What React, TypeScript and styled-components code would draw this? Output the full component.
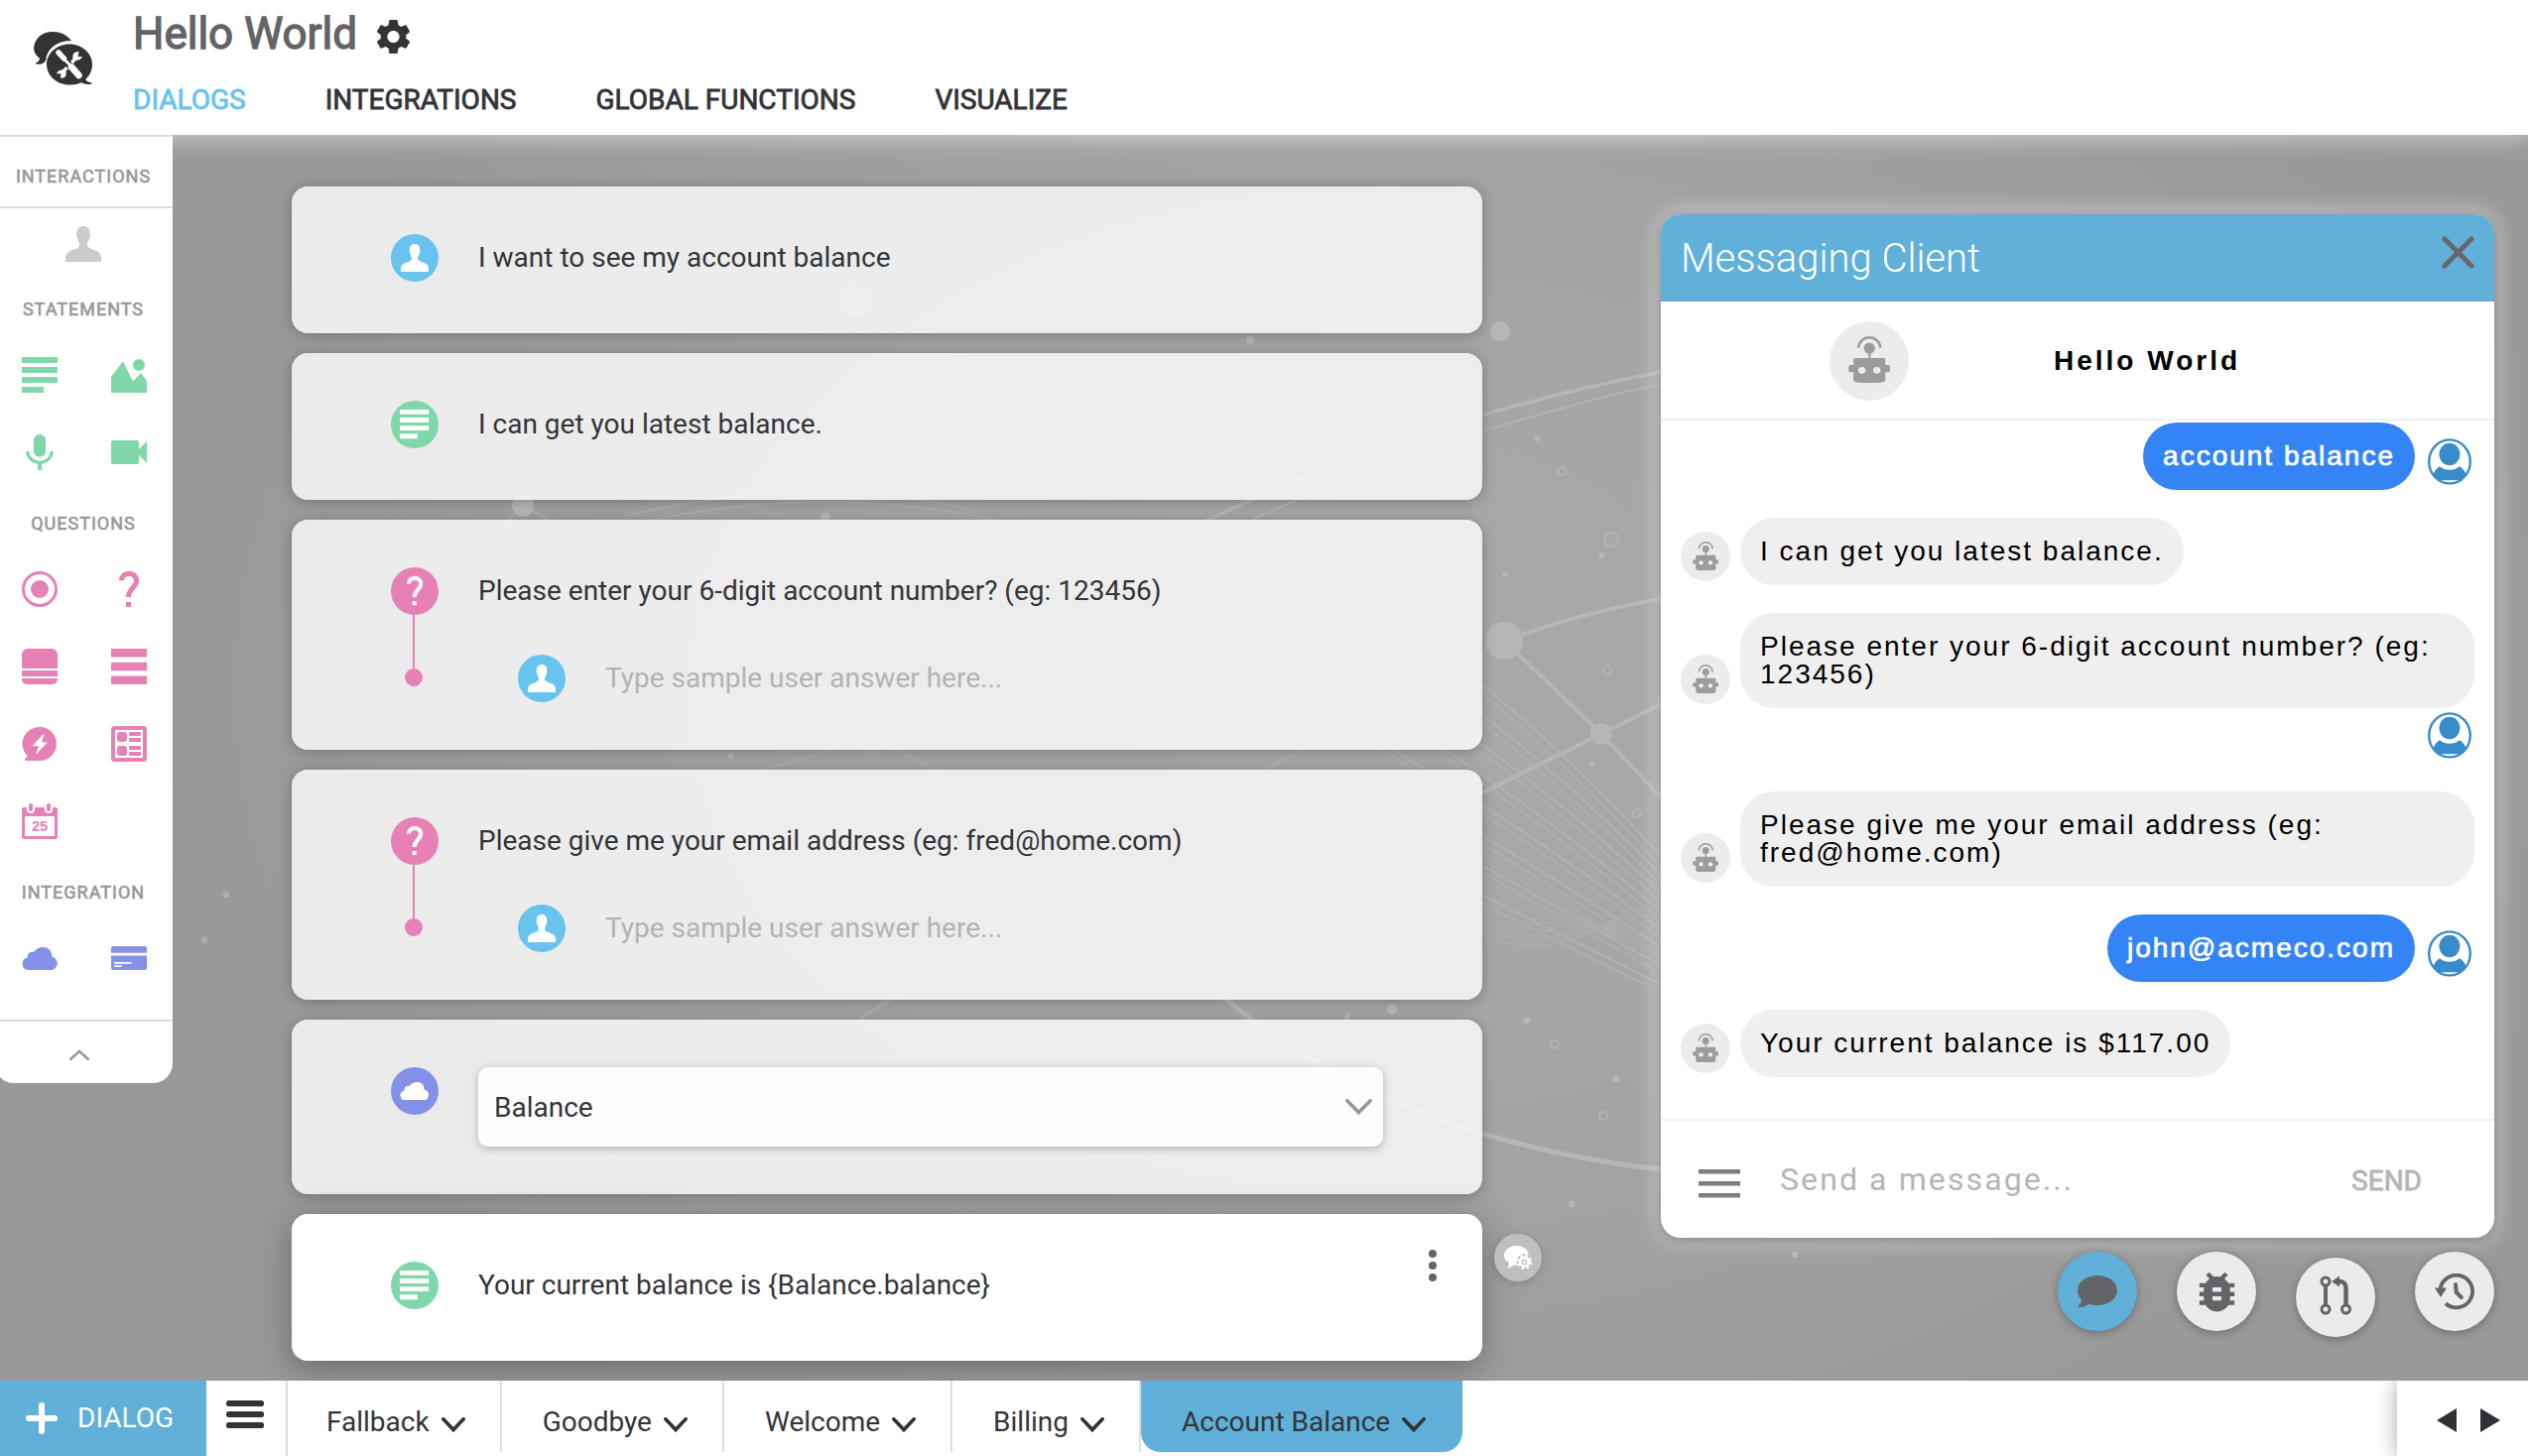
import React from 'react';
import styled, { createGlobalStyle, css } from 'styled-components';

const GREEN = '#7fd7aa';
const PINK = '#e681b6';
const BLUE = '#69c3ef';
const VIOLET = '#8491e8';
const BRAND = '#60b0d9';
const INK = '#333438';

const GlobalStyle = createGlobalStyle`
  * { box-sizing: border-box; }
  body { margin: 0; background: #fff; font-family: Roboto, "Liberation Sans", sans-serif; color: ${INK}; }
  button { font: inherit; color: inherit; border: 0; background: none; padding: 0; }
  svg { display: block; flex: none; }
`;

const Page = styled.div`
  width: 2548px;
  height: 1468px;
  display: flex;
  flex-direction: column;
  overflow: hidden;
`;

/* ---------- header ---------- */

const Header = styled.header`
  position: relative;
  z-index: 1;
  height: 136px;
  flex: none;
  display: flex;
  background: #fff;
  box-shadow: 0 0 24px rgba(255, 255, 255, 0.65);
`;

const LogoBox = styled.div`
  width: 134px;
  padding: 32px 0 0 34px;
`;

const HeaderBody = styled.div`
  padding-top: 12px;
`;

const TitleRow = styled.div`
  display: flex;
  align-items: center;
  gap: 20px;
  height: 44px;
  svg {
    margin-top: 5px;
  }
`;

const Title = styled.h1`
  margin: 0;
  font-size: 44px;
  line-height: 44px;
  font-weight: 400;
  color: #636467;
  -webkit-text-stroke: 1.3px #636467;
`;

const Nav = styled.nav`
  display: flex;
  gap: 80px;
  margin-top: 28px;
`;

const NavItem = styled.a<{ $active?: boolean }>`
  font-size: 28px;
  line-height: 34px;
  color: ${(p) => (p.$active ? BLUE : INK)};
  -webkit-text-stroke: 0.8px ${(p) => (p.$active ? BLUE : INK)};
`;

/* ---------- workspace ---------- */

const Workspace = styled.main`
  position: relative;
  height: 1256px;
  flex: none;
  display: flex;
  background: radial-gradient(ellipse 1250px 900px at 1400px 560px, #a9a9a9 0%, #a5a5a5 45%, #999 100%);
`;

const Backdrop = styled.svg`
  position: absolute;
  inset: 0;
`;

const Sidebar = styled.aside`
  position: relative;
  z-index: 2;
  align-self: flex-start;
  width: 180px;
  height: 956px;
  margin-left: -6px;
  padding-left: 6px;
  background: #fff;
  border-top: 2px solid #dddce1;
  border-radius: 0 0 20px 20px;
`;

const GroupLabel = styled.div<{ $head?: boolean }>`
  width: 168px;
  text-align: center;
  font-size: 18px;
  line-height: 18px;
  letter-spacing: 1px;
  color: #97989a;
  -webkit-text-stroke: 0.6px #97989a;
  margin: 45px 0 39px;
  ${(p) =>
    p.$head &&
    css`
      margin: 0;
      padding: 31px 0 21px;
    `}
`;

const Rule = styled.div<{ $top?: number }>`
  height: 2px;
  margin: ${(p) => p.$top ?? 0}px 0 0 -6px;
  background: #dddce1;
`;

const Solo = styled.div`
  width: 168px;
  display: flex;
  justify-content: center;
  margin: 18px 0 -6px;
`;

const Palette = styled.div`
  display: grid;
  grid-template-columns: 36px 36px;
  grid-auto-rows: 36px;
  gap: 42px 54px;
  padding-left: 22px;
  place-items: center;
`;

const Collapse = styled.button`
  display: flex;
  justify-content: center;
  width: 159px;
  padding-top: 28px;
`;

const Flow = styled.section`
  position: relative;
  width: 1200px;
  margin-left: 120px;
  padding-top: 52px;
  display: flex;
  flex-direction: column;
  gap: 20px;
`;

const Card = styled.article<{ $active?: boolean; $height: number }>`
  display: flex;
  gap: 40px;
  height: ${(p) => p.$height}px;
  padding: 48px 46px 0 100px;
  border-radius: 16px;
  background: ${(p) => (p.$active ? '#fff' : 'rgba(255, 255, 255, 0.8)')};
  box-shadow: ${(p) => (p.$active ? '0 8px 34px rgba(0, 0, 0, 0.32)' : '0 2px 14px rgba(0, 0, 0, 0.26)')};
`;

const Rail = styled.div`
  width: 48px;
  display: flex;
  flex-direction: column;
  align-items: center;
`;

const Disc = styled.div<{ $color: string }>`
  width: 48px;
  height: 48px;
  flex: none;
  border-radius: 50%;
  background: ${(p) => p.$color};
  display: flex;
  align-items: center;
  justify-content: center;
`;

const Stem = styled.div`
  width: 2px;
  height: 54px;
  margin-left: -2px;
  background: ${PINK};
`;

const Knob = styled.div`
  width: 18px;
  height: 18px;
  margin-left: -2px;
  border-radius: 50%;
  background: ${PINK};
`;

const CardBody = styled.div`
  flex: 1;
`;

const Phrase = styled.p<{ $muted?: boolean }>`
  margin: 0;
  font-size: 28px;
  line-height: 48px;
  color: ${(p) => (p.$muted ? '#b3b3b3' : INK)};
`;

const Answer = styled.div`
  display: flex;
  gap: 40px;
  margin: 40px 0 0 40px;
`;

const Select = styled.div`
  display: flex;
  align-items: center;
  justify-content: space-between;
  width: 912px;
  height: 80px;
  padding: 0 11px 0 16px;
  border-radius: 10px;
  background: rgba(255, 255, 255, 0.87);
  box-shadow: 0 2px 8px rgba(0, 0, 0, 0.25);
  font-size: 28px;
`;

const MoreButton = styled.button`
  align-self: flex-start;
  margin: -12px 0 0 auto;
`;

const ContextBadge = styled.button`
  position: relative;
  align-self: flex-end;
  width: 48px;
  height: 48px;
  margin: 0 0 100px 12px;
  border-radius: 50%;
  background: #bfbfbf;
  box-shadow: 0 2px 8px rgba(0, 0, 0, 0.18);
  display: flex;
  align-items: center;
  justify-content: center;
`;

/* ---------- messaging client ---------- */

const Dock = styled.section`
  position: relative;
  width: 840px;
  margin: 0 34px 0 auto;
  padding-top: 80px;
`;

const Panel = styled.div`
  height: 1032px;
  display: flex;
  flex-direction: column;
  background: #fff;
  border-radius: 20px;
  box-shadow: 0 2px 10px rgba(0, 0, 0, 0.3), 0 0 20px 5px rgba(255, 255, 255, 0.42);
`;

const PanelHead = styled.div`
  height: 88px;
  flex: none;
  display: flex;
  justify-content: space-between;
  padding: 0 20px;
  background: ${BRAND};
  border-bottom: 2px solid #6ba5cb;
  border-radius: 20px 20px 0 0;
`;

const PanelTitle = styled.h2`
  margin: 0;
  font-size: 40px;
  line-height: 90px;
  font-weight: 300;
  color: #fff;
`;

const CloseButton = styled.button`
  align-self: flex-start;
  padding-top: 22px;
`;

const BotBar = styled.div`
  height: 120px;
  flex: none;
  display: flex;
  padding: 20px 0 0 170px;
  border-bottom: 2px solid #efefef;
`;

const BotFace = styled.div<{ $size: number }>`
  width: ${(p) => p.$size}px;
  height: ${(p) => p.$size}px;
  flex: none;
  border-radius: 50%;
  background: #ececec;
  display: flex;
  justify-content: center;
  padding-top: ${(p) => p.$size * 0.19}px;
`;

const BotName = styled.strong`
  margin-left: 146px;
  font: 700 28px/80px "Liberation Sans", Arial, sans-serif;
  letter-spacing: 3px;
  color: #000;
`;

const Thread = styled.div`
  flex: 1;
  display: flex;
  flex-direction: column;
  gap: 28px;
  padding: 2px 20px 0;
`;

const Message = styled.div<{ $mine?: boolean }>`
  display: flex;
  align-items: flex-end;
  justify-content: ${(p) => (p.$mine ? 'flex-end' : 'flex-start')};
  gap: ${(p) => (p.$mine ? 13 : 10)}px;
  min-height: 28px;
  padding-right: ${(p) => (p.$mine ? 3 : 0)}px;
  ${BotFace} {
    margin-bottom: 4px;
  }
`;

const Bubble = styled.div<{ $mine?: boolean }>`
  padding: 20px;
  border-radius: 34px;
  font: 400 28px/28px "Liberation Sans", Arial, sans-serif;
  letter-spacing: 2px;
  color: ${(p) => (p.$mine ? '#fff' : '#000')};
  background: ${(p) => (p.$mine ? '#3484f6' : '#efefef')};
  -webkit-text-stroke: ${(p) => (p.$mine ? '0.7px #fff' : '0')};
`;

const UserSlot = styled.div`
  height: 28px;
  display: flex;
  align-items: flex-end;
  padding-bottom: 5px;
`;

const Composer = styled.div`
  height: 120px;
  flex: none;
  display: flex;
  align-items: center;
  padding: 0 73px 0 38px;
  border-top: 2px solid #efefef;
  svg {
    margin-top: 9px;
  }
`;

const Hint = styled.span`
  flex: 1;
  margin-left: 40px;
  padding-bottom: 1px;
  font-size: 32px;
  letter-spacing: 2.1px;
  color: #b5b5b5;
`;

const Send = styled.button`
  font-size: 28px;
  padding-top: 3px;
  color: #b5b5b5;
  -webkit-text-stroke: 0.8px #b5b5b5;
`;

const Tools = styled.div`
  display: flex;
  justify-content: flex-end;
  align-items: flex-start;
  gap: 40px;
  margin-top: 14px;
`;

const Tool = styled.button<{ $active?: boolean; $drop?: number }>`
  width: 80px;
  height: 80px;
  margin-top: ${(p) => p.$drop ?? 0}px;
  padding-bottom: ${(p) => (p.$drop ? 4 : 0)}px;
  border-radius: 50%;
  background: ${(p) => (p.$active ? BRAND : '#ebebeb')};
  box-shadow: 0 2px 10px rgba(0, 0, 0, 0.3);
  display: flex;
  align-items: center;
  justify-content: center;
`;

/* ---------- bottom tabs ---------- */

const Footer = styled.footer`
  position: relative;
  height: 76px;
  flex: none;
  display: flex;
  background: #fff;
`;

const NewDialog = styled.button`
  width: 208px;
  display: flex;
  align-items: center;
  gap: 20px;
  padding: 0 0 1px 26px;
  background: ${BRAND};
  color: #fff;
  font-size: 28px;
`;

const ListButton = styled.button`
  width: 82px;
  display: flex;
  align-items: flex-start;
  padding: 20px 0 0 20px;
  border-right: 2px solid #dddce0;
`;

const Tab = styled.div<{ $active?: boolean; $pad: number }>`
  height: 72px;
  display: flex;
  align-items: center;
  gap: 12px;
  padding: 12px ${(p) => (p.$active ? 37 : 35)}px 0 ${(p) => p.$pad}px;
  font-size: 28px;
  line-height: 60px;
  border-right: ${(p) => (p.$active ? 'none' : '2px solid #dddce0')};
  background: ${(p) => (p.$active ? BRAND : 'transparent')};
  border-radius: ${(p) => (p.$active ? '0 0 20px 20px' : '0')};
  svg {
    margin-top: 5px;
  }
`;

const Pager = styled.div`
  width: 132px;
  margin-left: auto;
  display: flex;
  align-items: flex-start;
  gap: 24px;
  padding: 28px 0 0 40px;
  background: #fff;
  box-shadow: 0 0 20px rgba(0, 0, 0, 0.35);
  clip-path: inset(0 0 0 -30px);
`;

/* ---------- icons ---------- */

type IconProps = { color?: string; scale?: number };

const Logo = () => (
  <svg width="60" height="55" viewBox="0 0 60 55">
    <path d="M19 0C30 0 36 6 38 9.5C26 8 13 17 12.5 28C10 33.500 6 33 2.500 32.500C1.500 32 2 31 4 30.500C5 29.500 6 28 6 27C2 24 0 20 0 16.500C1 6 9 0 19 0z" fill="#333" />
    <path d="M36 12.500c12.700 0 23 9.200 23 20.500 0 6-2.500 11-6.500 14.700 0 1.800 2 2.900 5.300 3.600 1.400.4 1.200 1.200 0 1.400-3.700.5-7 .3-9.800-1.400A25 25 0 0 1 36 53.500c-12.700 0-23-9.200-23-20.500s10.300-20.500 23-20.500z" fill="#333" />
    <path d="M29 41l14-15" stroke="#fff" strokeWidth="3.400" />
    <path d="M45.500 20.500c-4-.8-7 2-6 6.500 3 3 8 2 9.500-2l-4.500.3z" fill="#fff" />
    <path d="M27 46.500c4 1 6.500-2 5.500-6.300-3-3-8-2-9.500 2.200l4.300-.5z" fill="#fff" />
    <path d="M28 25l9 10" stroke="#333" strokeWidth="7" />
    <path d="M24.500 21.500l5 5L37 34" stroke="#fff" strokeWidth="2.800" fill="none" />
    <path d="M25 21l5.500 6" stroke="#fff" strokeWidth="5.500" strokeLinecap="round" />
    <path d="M38 35.500l7.500 8.500" stroke="#fff" strokeWidth="6.600" strokeLinecap="round" />
  </svg>
);

const GearIcon = () => (
  <svg width="33" height="34" viewBox="2.300 2 19.400 20" preserveAspectRatio="none">
    <path
      fill="#333438"
      d="M19.430 12.980c.04-.32.07-.64.07-.98s-.03-.66-.07-.98l2.110-1.650c.19-.15.240-.42.120-.64l-2-3.460c-.12-.22-.39-.3-.61-.22l-2.490 1c-.52-.4-1.080-.73-1.690-.98l-.38-2.650A.488.488 0 0 0 14 2h-4c-.25 0-.46.18-.49.420l-.38 2.650c-.61.250-1.170.59-1.690.98l-2.490-1c-.23-.09-.49 0-.61.220l-2 3.460c-.13.220-.07.490.120.640l2.110 1.650c-.04.320-.07.650-.07.980s.03.660.07.980l-2.110 1.650c-.19.150-.24.420-.12.640l2 3.460c.12.220.39.300.61.220l2.490-1c.52.400 1.080.730 1.690.980l.38 2.650c.03.240.24.420.49.420h4c.25 0 .46-.18.490-.42l.38-2.650c.61-.25 1.170-.59 1.690-.98l2.490 1c.23.090.49 0 .61-.22l2-3.460c.12-.22.070-.49-.12-.64l-2.110-1.650zM12 15.600c-1.980 0-3.600-1.620-3.600-3.600s1.620-3.600 3.600-3.600 3.600 1.620 3.600 3.600-1.620 3.600-3.600 3.600z"
    />
  </svg>
);

const PersonIcon = ({ color = '#fff', scale = 1 }: IconProps) => (
  <svg width={36 * scale} height={36 * scale} viewBox="0 0 36 36">
    <path
      fill={color}
      d="M18 0c4 0 6.700 2.600 6.500 7 .7 1 .5 3.800-.5 5-.5 3-1.500 4.300-2 5.500v2.500c.3 1.600 2.500 2.500 5 3.400C32.500 25 35.500 26.500 36 32v2.500c0 1-.6 1.500-1.500 1.500h-33C.6 36 0 35.500 0 34.500V32c.5-5.500 3.500-7 9-8.600 2.500-.9 4.700-1.800 5-3.400v-2.500c-.5-1.200-1.500-2.500-2-5.500-1-1.200-1.200-4-.5-5C11.300 2.600 14 0 18 0z"
    />
  </svg>
);

const TextIcon = ({ color = '#fff', scale = 1 }: IconProps) => (
  <svg width={36 * scale} height={36 * scale} viewBox="0 0 36 36">
    <path fill={color} d="M0 0h36v6H0zM0 10h36v6H0zM0 20h36v6H0zM0 30h22v6H0z" />
  </svg>
);

const ImageIcon = () => (
  <svg width="36" height="36" viewBox="0 0 36 36" fill={GREEN}>
    <path d="M0 20L12 4.300 22 24.500 30 16l6 8.300V36H0z" />
    <circle cx="28" cy="8" r="6" />
  </svg>
);

const MicIcon = () => (
  <svg width="28" height="36" viewBox="5 2 14 19" preserveAspectRatio="none">
    <path
      fill={GREEN}
      d="M12 14c1.660 0 3-1.340 3-3V5c0-1.660-1.340-3-3-3S9 3.340 9 5v6c0 1.660 1.340 3 3 3zm5.300-3c0 3-2.540 5.100-5.300 5.100S6.700 14 6.700 11H5c0 3.410 2.720 6.230 6 6.720V21h2v-3.280c3.280-.48 6-3.300 6-6.720h-1.700z"
    />
  </svg>
);

const VideoIcon = () => (
  <svg width="36" height="24" viewBox="3 6 18 12">
    <path fill={GREEN} d="M17 10.500V7c0-.55-.45-1-1-1H4c-.55 0-1 .45-1 1v10c0 .55.450 1 1 1h12c.55 0 1-.45 1-1v-3.500l4 4v-11l-4 4z" />
  </svg>
);

const RadioIcon = () => (
  <svg width="36" height="36" viewBox="0 0 36 36">
    <circle cx="18" cy="18" r="16.500" fill="none" stroke={PINK} strokeWidth="3" />
    <circle cx="18" cy="18" r="9" fill={PINK} />
  </svg>
);

const QuestionIcon = ({ color = '#fff', scale = 1 }: IconProps) => (
  <svg width={20 * scale} height={36 * scale} viewBox="0 0 20 36">
    <path d="M2.500 9.300C2.500 5 5.500 2.400 10 2.400s7.500 2.800 7.500 7.400c0 6.200-8 7.700-8 16.200" fill="none" stroke={color} strokeWidth="5" />
    <path d="M7 31h5v5H7z" fill={color} />
  </svg>
);

const CardIcon = () => (
  <svg width="36" height="36" viewBox="0 0 36 36">
    <path fill={PINK} d="M6 0h24a6 6 0 0 1 6 6v14H0V6a6 6 0 0 1 6-6zM0 22h36v6H0zM0 30h36v1a5 5 0 0 1-5 5H5a5 5 0 0 1-5-5z" />
  </svg>
);

const RowsIcon = () => (
  <svg width="36" height="36" viewBox="0 0 36 36">
    <path fill={PINK} d="M0 0h36v8.400H0zM0 13.800h36v8.400H0zM0 27.600h36V36H0z" />
  </svg>
);

const BoltIcon = () => (
  <svg width="36" height="36" viewBox="0 0 36 36">
    <path fill={PINK} d="M18 1a17 17 0 1 1 0 34H4c-1.500 0-1.300-1.600-.3-2.400L6 30.500A17 17 0 0 1 18 1z" />
    <path fill="#fff" d="M22.600 7L10.600 20.200h6.600L14 29l11.600-12.400H20z" />
  </svg>
);

const FormIcon = () => (
  <svg width="36" height="36" viewBox="0 0 36 36" fill={PINK}>
    <rect x="2" y="2" width="32" height="32" rx="1.500" fill="none" stroke={PINK} strokeWidth="4" />
    <rect x="6" y="6" width="10" height="10" rx="3" />
    <rect x="6" y="20" width="10" height="10" rx="3" />
    <rect x="18" y="6" width="12" height="4" rx="1" />
    <rect x="18" y="12" width="12" height="4" rx="1" />
    <rect x="18" y="20" width="12" height="4" rx="1" />
    <rect x="18" y="26" width="12" height="4" rx="1" />
  </svg>
);

const CalendarIcon = () => (
  <svg width="36" height="36" viewBox="0 0 36 36">
    <path fill={PINK} fillRule="evenodd" d="M1.500 4h33L36 5.500v29L34.500 36h-33L0 34.500v-29zM3 13v20h30V13z" />
    <path d="M9 2v4M27 2v4" stroke="#fff" strokeWidth="8" strokeLinecap="round" />
    <path d="M9 2v4M27 2v4" stroke={PINK} strokeWidth="4" strokeLinecap="round" />
    <text x="18" y="27.800" textAnchor="middle" fontFamily="Liberation Sans, Arial, sans-serif" fontSize="14.500" fontWeight="700" fill={PINK}>
      25
    </text>
  </svg>
);

const CloudIcon = ({ color = '#fff', scale = 1 }: IconProps) => (
  <svg width={36 * scale} height={23 * scale} viewBox="0 0 36 23">
    <path fill={color} d="M6 23a6.300 6.300 0 0 1-.4-12.400C5.300 6.500 8 4.200 12.300 4.800 14 1.500 17.500 0 21.500 0c5.500 0 8.800 3.800 9 9.600A6.800 6.800 0 0 1 29.500 23z" />
  </svg>
);

const CreditIcon = () => (
  <svg width="36" height="24" viewBox="0 0 36 24">
    <path fill={VIOLET} fillRule="evenodd" d="M1.500 0h33L36 1.500V6.700H0V1.500zM0 9.500h36v13L34.500 24h-33L0 22.500zM3 16v1.800h17.500V16zM3 19.200V21h7.500v-1.800z" />
  </svg>
);

const Chevron = ({ up, color, width, height, weight }: { up?: boolean; color: string; width: number; height: number; weight: number }) => {
  const h = weight / 2;
  const near = up ? height - h : h;
  const far = up ? h + 0.6 : height - h - 0.6;
  return (
    <svg width={width} height={height} viewBox={`0 0 ${width} ${height}`}>
      <path
        d={`M${h} ${near}L${width / 2} ${far}L${width - h} ${near}`}
        fill="none"
        stroke={color}
        strokeWidth={weight}
        strokeLinecap="round"
      />
    </svg>
  );
};

const RobotIcon = ({ size }: { size: number }) => (
  <svg width={size * 0.53} height={size * 0.59} viewBox="0 0 42 47" fill="#9c9c9c">
    <path d="M10 11.800a11 10.600 0 0 1 22 0" fill="none" stroke="#9c9c9c" strokeWidth="2.400" />
    <circle cx="21" cy="12" r="5.600" />
    <path d="M20 16h2.200v7H20z" />
    <path fillRule="evenodd" d="M7 22h28q2 0 2 2v5h3q2 0 2 3.500T40 36h-3v8q0 1.500-2 2-14 2-28 0-2-.5-2-2v-8H2q-2 0-2-3.500T2 29h3v-5q0-2 2-2zm6.500 8.800a3.700 3.400 0 1 0 0 6.800 3.700 3.400 0 1 0 0-6.800zm15 0a3.700 3.400 0 1 0 0 6.800 3.700 3.400 0 1 0 0-6.800z" />
  </svg>
);

const UserAvatar = () => (
  <svg width="44" height="47" viewBox="0 0 44 47">
    <ellipse cx="22" cy="23.400" rx="20.800" ry="22" fill="#fff" stroke="#3a8bc9" strokeWidth="2.400" />
    <ellipse cx="22" cy="16" rx="10.500" ry="11.300" fill="#3a8bc9" />
    <path d="M5 37c1.500-4 4-7 7-8.700C17.500 33 26.500 33 32 28.300c3 1.700 5.500 4.700 7 8.700-1.500 2-3 3.700-5 5.200H10C8 40.700 6.500 39 5 37z" fill="#3a8bc9" />
  </svg>
);

const CloseIcon = () => (
  <svg width="33" height="33" viewBox="0 0 33 33">
    <path d="M3 3l27 27M30 3L3 30" stroke="#66676a" strokeWidth="5" strokeLinecap="round" />
  </svg>
);

const KebabIcon = () => (
  <svg width="8" height="32" viewBox="0 0 8 32" fill="#636466">
    <circle cx="4" cy="4" r="4" />
    <circle cx="4" cy="16" r="4" />
    <circle cx="4" cy="28" r="4" />
  </svg>
);

const MenuIcon = () => (
  <svg width="42" height="29" viewBox="0 0 42 29">
    <path fill="#7e7e7e" d="M0 0h42v4.500H0zM0 12h42v4.500H0zM0 24h42v4.500H0z" />
  </svg>
);

const ChatGearIcon = () => (
  <svg width="28" height="24" viewBox="0 0 28 24">
    <path fill="#fff" d="M12.500 0C19.500 0 24 4 24.500 8.500L22 20c-3 .8-10 0-12.500-.7-1.500 1.800-4 3.300-6.500 3.500 1.500-2 2-3.500 2-5.500C2 15.500 0 13 0 10 0 4.500 5.500 0 12.500 0z" />
    <circle cx="20.500" cy="16.300" r="8" fill="#bfbfbf" />
    <circle cx="20.500" cy="16.300" r="6.500" fill="none" stroke="#fff" strokeWidth="2.200" strokeDasharray="2.750 2.350" />
    <circle cx="20.500" cy="16.300" r="4.300" fill="none" stroke="#fff" strokeWidth="2.800" />
    <circle cx="20.500" cy="16.300" r="1.600" fill="#fff" />
  </svg>
);

const ChatIcon = () => (
  <svg width="40" height="33" viewBox="0 0 40 33">
    <path fill="#636467" d="M20 0c11 0 20 6.600 20 15s-9 15-20 15c-3 0-5.800-.5-8.200-1.300C9 30.700 4.500 32.300.800 32.200c-.6-.2-.6-.8 0-1.400 1.700-2 3-4.300 3.200-6.400C1.400 21.800 0 18.600 0 15 0 6.600 9 0 20 0z" />
  </svg>
);

const BugIcon = () => (
  <svg width="53" height="53" viewBox="0 0 24 24">
    <path
      fill="#636467"
      d="M20 8h-2.810c-.45-.78-1.070-1.450-1.820-1.960L17 4.410 15.590 3l-2.170 2.170C12.960 5.060 12.490 5 12 5c-.49 0-.96.06-1.410.170L8.410 3 7 4.410l1.620 1.630C7.880 6.550 7.260 7.220 6.810 8H4v2h2.090c-.05.330-.09.660-.09 1v1H4v2h2v1c0 .340.040.670.090 1H4v2h2.810c1.040 1.790 2.970 3 5.190 3s4.150-1.210 5.190-3H20v-2h-2.090c.05-.33.090-.66.090-1v-1h2v-2h-2v-1c0-.34-.04-.67-.09-1H20V8zm-6 8h-4v-2h4v2zm0-4h-4v-2h4v2z"
    />
  </svg>
);

const BranchIcon = () => (
  <svg width="33" height="40" viewBox="0 0 33 40" fill="none" stroke="#636467" strokeWidth="3">
    <circle cx="6" cy="6" r="4" />
    <circle cx="6" cy="34" r="4" />
    <circle cx="26.500" cy="34" r="4" />
    <path d="M6 10v20" strokeWidth="4" />
    <path d="M26.500 30V13c0-5-2-7-7.500-7" strokeWidth="4.500" />
    <path d="M12 6L20 .5v11z" fill="#636467" stroke="none" />
  </svg>
);

const HistoryIcon = () => (
  <svg width="40" height="37" viewBox="0 0 40 37" fill="none" stroke="#636467" strokeWidth="3.800">
    <path d="M5.500 17A16.300 16.300 0 1 1 11 30.200" />
    <path d="M0 14.500h12L6 24z" fill="#636467" stroke="none" />
    <path d="M21 11l.8 8 5 5" strokeLinecap="round" strokeWidth="4" />
  </svg>
);

const PlusIcon = () => (
  <svg width="32" height="32" viewBox="0 0 32 32">
    <path d="M16 3v26M3 16h26" stroke="#fff" strokeWidth="6" strokeLinecap="round" />
  </svg>
);

const ListIcon = () => (
  <svg width="38" height="28" viewBox="0 0 38 28" fill="#333">
    <rect width="38" height="6" rx="2.500" />
    <rect y="11" width="38" height="6" rx="2.500" />
    <rect y="22" width="38" height="6" rx="2.500" />
  </svg>
);

const Arrow = ({ left }: { left?: boolean }) => (
  <svg width="20" height="24" viewBox="0 0 20 24">
    <path d={left ? 'M20 0v24L0 12z' : 'M0 0v24l20-12z'} fill="#303135" />
  </svg>
);

/* Constellation artwork behind the workspace; coordinates are in workspace pixels. */

const DOTS: [number, number, number][] = [
  [1512, 198, 10], [1550, 306, 3], [1614, 424, 3], [1517, 443, 3], [1516, 510, 19], [1614, 604, 11],
  [1605, 634, 3], [1539, 893, 3.5], [1629, 952, 3.500], [1584, 1078, 3.500], [1403, 881, 5.500],
  [1358, 889, 3], [527, 374, 11], [832, 386, 5], [1809, 1129, 3], [737, 626, 3], [1260, 207, 4],
];

const SOFT_DOTS: [number, number, number][] = [
  [862, 168, 16], [880, 608, 18], [228, 766, 3.500], [206, 812, 3], [1080, 745, 20],
];

const RINGS: [number, number, number][] = [
  [1574, 339, 4], [1624, 408, 7], [1620, 540, 4], [1650, 684, 4], [1567, 917, 4], [1616, 989, 4],
];

const Network = () => (
  <Backdrop width="2548" height="1256" viewBox="0 0 2548 1256" fill="none" stroke="#b6b6b6">
    <g stroke="#adadad">
      <path d="M866 892L896 872L1080 745L1516 510" strokeWidth="4" />
      <path d="M650 390Q830 350 1010 390M630 384Q820 340 980 378" strokeWidth="2" />
      <path d="M527 374L500 400M527 374L560 392M880 608L770 640M880 608L960 650" strokeWidth="2" />
    </g>
    <path d="M1100 450Q1360 300 1674 239" strokeWidth="3.500" />
    <path d="M1100 470Q1370 318 1674 251" strokeWidth="1.500" />
    <path d="M1516 510Q1600 480 1674 468M1516 510L1614 604L1674 668M1674 574L1614 604L1420 700" strokeWidth="4" />
    <path d="M1200 840Q1380 1010 1674 1043" strokeWidth="5" />
    <g stroke="#b2b2b2" strokeWidth="2">
      {Array.from({ length: 8 }, (_, i) => (
        <g key={i}>
          <path d={`M1380 ${470 + i * 34}Q1540 ${575 + i * 31} 1690 ${745 + i * 17}`} />
          <path d={`M1380 ${476 + i * 34}Q1535 ${582 + i * 31} 1685 ${750 + i * 17}`} strokeWidth="1.300" />
        </g>
      ))}
      {Array.from({ length: 14 }, (_, i) => (
        <path key={i} d={`M1480 ${710 + i * 7}Q1590 ${765 + i * 7} 1690 ${872 - i * 11}`} strokeWidth="1" stroke="#afafaf" />
      ))}
    </g>
    <g fill="#b6b6b6" stroke="none">
      {DOTS.map(([x, y, r]) => (
        <circle key={`${x}-${y}`} cx={x} cy={y} r={r} />
      ))}
    </g>
    <g fill="#adadad" stroke="none">
      {SOFT_DOTS.map(([x, y, r]) => (
        <circle key={`${x}-${y}`} cx={x} cy={y} r={r} />
      ))}
    </g>
    <g stroke="#b4b4b4" strokeWidth="2">
      {RINGS.map(([x, y, r]) => (
        <circle key={`${x}-${y}`} cx={x} cy={y} r={r} />
      ))}
    </g>
  </Backdrop>
);

/* ---------- composed parts ---------- */

const UserDisc = () => (
  <Disc $color={BLUE}>
    <PersonIcon scale={0.78} />
  </Disc>
);

const TextDisc = () => (
  <Disc $color={GREEN}>
    <TextIcon scale={0.81} />
  </Disc>
);

const QuestionCard = ({ text }: { text: string }) => (
  <Card $height={232}>
    <Rail>
      <Disc $color={PINK}>
        <QuestionIcon scale={0.81} />
      </Disc>
      <Stem />
      <Knob />
    </Rail>
    <CardBody>
      <Phrase>{text}</Phrase>
      <Answer>
        <UserDisc />
        <Phrase $muted>Type sample user answer here...</Phrase>
      </Answer>
    </CardBody>
  </Card>
);

const NAV = ['DIALOGS', 'INTEGRATIONS', 'GLOBAL FUNCTIONS', 'VISUALIZE'];
const TABS = ['Fallback', 'Goodbye', 'Welcome', 'Billing', 'Account Balance'];

const MESSAGES: { mine?: boolean; text?: string }[] = [
  { mine: true, text: 'account balance' },
  { text: 'I can get you latest balance.' },
  { text: 'Please enter your 6-digit account number? (eg: 123456)' },
  { mine: true },
  { text: 'Please give me your email address (eg: fred@home.com)' },
  { mine: true, text: 'john@acmeco.com' },
  { text: 'Your current balance is $117.00' },
];

export default function App() {
  return (
    <Page>
      <GlobalStyle />
      <Header>
        <LogoBox>
          <Logo />
        </LogoBox>
        <HeaderBody>
          <TitleRow>
            <Title>Hello World</Title>
            <GearIcon />
          </TitleRow>
          <Nav>
            {NAV.map((label, i) => (
              <NavItem key={label} $active={i === 0}>
                {label}
              </NavItem>
            ))}
          </Nav>
        </HeaderBody>
      </Header>

      <Workspace>
        <Network />
        <Sidebar>
          <GroupLabel $head>INTERACTIONS</GroupLabel>
          <Rule />
          <Solo>
            <PersonIcon color="#cbcbcb" />
          </Solo>
          <GroupLabel>STATEMENTS</GroupLabel>
          <Palette>
            <TextIcon color={GREEN} />
            <ImageIcon />
            <MicIcon />
            <VideoIcon />
          </Palette>
          <GroupLabel>QUESTIONS</GroupLabel>
          <Palette>
            <RadioIcon />
            <QuestionIcon color={PINK} />
            <CardIcon />
            <RowsIcon />
            <BoltIcon />
            <FormIcon />
            <CalendarIcon />
          </Palette>
          <GroupLabel>INTEGRATION</GroupLabel>
          <Palette>
            <CloudIcon color={VIOLET} />
            <CreditIcon />
          </Palette>
          <Rule $top={44} />
          <Collapse>
            <Chevron up color="#979797" width={20} height={11} weight={2.6} />
          </Collapse>
        </Sidebar>

        <Flow>
          <Card $height={148}>
            <UserDisc />
            <Phrase>I want to see my account balance</Phrase>
          </Card>
          <Card $height={148}>
            <TextDisc />
            <Phrase>I can get you latest balance.</Phrase>
          </Card>
          <QuestionCard text="Please enter your 6-digit account number? (eg: 123456)" />
          <QuestionCard text="Please give me your email address (eg: fred@home.com)" />
          <Card $height={176}>
            <Disc $color={VIOLET}>
              <CloudIcon scale={0.81} />
            </Disc>
            <Select>
              Balance
              <Chevron color="#97989a" width={27} height={16} weight={3.600} />
            </Select>
          </Card>
          <Card $height={148} $active>
            <TextDisc />
            <Phrase>Your current balance is {'{Balance.balance}'}</Phrase>
            <MoreButton>
              <KebabIcon />
            </MoreButton>
          </Card>
        </Flow>

        <ContextBadge>
          <ChatGearIcon />
        </ContextBadge>

        <Dock>
          <Panel>
            <PanelHead>
              <PanelTitle>Messaging Client</PanelTitle>
              <CloseButton>
                <CloseIcon />
              </CloseButton>
            </PanelHead>
            <BotBar>
              <BotFace $size={80}>
                <RobotIcon size={80} />
              </BotFace>
              <BotName>Hello World</BotName>
            </BotBar>
            <Thread>
              {MESSAGES.map(({ mine, text }, i) => (
                <Message key={i} $mine={mine}>
                  {!mine && (
                    <BotFace $size={50}>
                      <RobotIcon size={50} />
                    </BotFace>
                  )}
                  {text && <Bubble $mine={mine}>{text}</Bubble>}
                  {mine && (
                    <UserSlot>
                      <UserAvatar />
                    </UserSlot>
                  )}
                </Message>
              ))}
            </Thread>
            <Composer>
              <MenuIcon />
              <Hint>Send a message...</Hint>
              <Send>SEND</Send>
            </Composer>
          </Panel>
          <Tools>
            <Tool $active>
              <ChatIcon />
            </Tool>
            <Tool>
              <BugIcon />
            </Tool>
            <Tool $drop={6}>
              <BranchIcon />
            </Tool>
            <Tool>
              <HistoryIcon />
            </Tool>
          </Tools>
        </Dock>
      </Workspace>

      <Footer>
        <NewDialog>
          <PlusIcon />
          DIALOG
        </NewDialog>
        <ListButton>
          <ListIcon />
        </ListButton>
        {TABS.map((label, i) => (
          <Tab key={label} $active={i === TABS.length - 1} $pad={i === 0 ? 39 : 41}>
            {label}
            <Chevron color="#333" width={24} height={15} weight={3.600} />
          </Tab>
        ))}
        <Pager>
          <Arrow left />
          <Arrow />
        </Pager>
      </Footer>
    </Page>
  );
}
